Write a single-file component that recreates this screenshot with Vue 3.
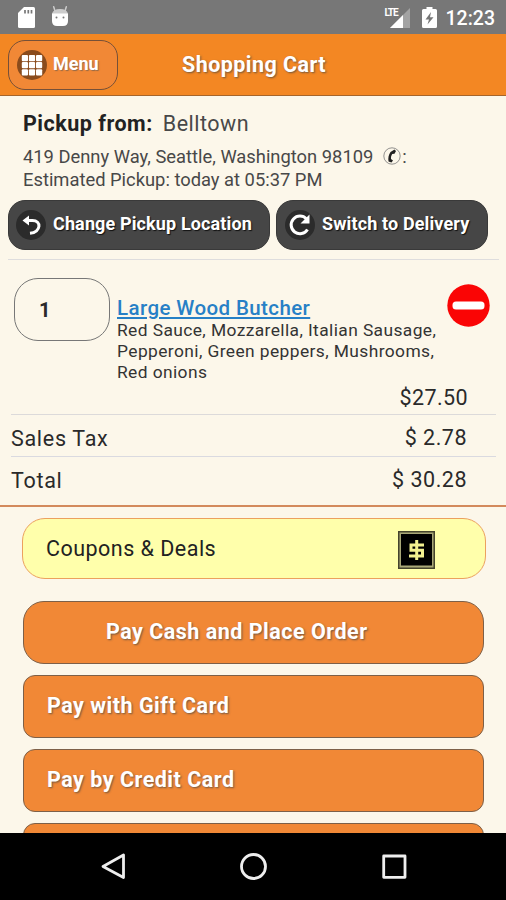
<script setup>
const payments = [
  { label: 'Pay Cash and Place Order', kind: 'primary' },
  { label: 'Pay with Gift Card', kind: 'gift' },
  { label: 'Pay by Credit Card', kind: 'credit' },
]
const toppings = ['Red Sauce, Mozzarella, Italian Sausage,', 'Pepperoni, Green peppers, Mushrooms,', 'Red onions']
const cells = [0, 1, 2, 3, 4, 5, 6, 7, 8]
</script>

<template>
  <div class="screen">
    <div class="status">
      <svg class="sd" width="17" height="21" viewBox="0 0 17 21">
        <path d="M6 0H15.5Q17 0 17 1.5V19.5Q17 21 15.5 21H1.5Q0 21 0 19.500V6Z" fill="#fff" />
        <path d="M7 3V6.500M10.300 3V6.500M13.500 3V6.500" stroke="#777" stroke-width="1.700" />
      </svg>
      <svg class="droid" width="18" height="21" viewBox="0 0 18 21">
        <path d="M4 5L2.700.800M14 5L15.300.800" stroke="#ccc" stroke-width="1.500" stroke-linecap="round" />
        <path d="M1 8Q2 3 9 3T17 8Z" fill="#ccc" />
        <path d="M1 7.500H17V15Q17 20 12 20H6Q1 20 1 15Z" fill="#fff" />
        <circle cx="5.500" cy="11.500" r="1" fill="#777" />
        <circle cx="12.500" cy="11.500" r="1" fill="#777" />
      </svg>
      <div class="network">
        <span class="lte">LTE</span>
        <svg width="21" height="20" viewBox="0 0 21 20">
          <path d="M20 0V20H0Z" fill="#a3a3a3" />
          <path d="M13 7V20H0Z" fill="#fff" />
        </svg>
      </div>
      <svg class="battery" width="15" height="21" viewBox="0 0 15 21">
        <path d="M4.500 0H10.500V2H13.500Q15 2 15 3.500V19.500Q15 21 13.500 21H1.500Q0 21 0 19.500V3.500Q0 2 1.500 2H4.500Z" fill="#fff" />
        <path d="M9 5L3.500 12.500H7L5.500 17.500L11.500 10.300H8Z" fill="#777" />
      </svg>
      <span class="clock">12:23</span>
    </div>

    <header class="header">
      <button class="menu">
        <svg width="30" height="30" viewBox="0 0 30 30">
          <circle cx="15" cy="15" r="15" fill="#8a4b1c" />
          <rect v-for="c in cells" :key="c" :x="4.800 + (c % 3) * 7.100" :y="5 + Math.floor(c / 3) * 7.100" width="6.200" height="6.200" rx="1" fill="#fff" />
        </svg>
        <span class="menu-text">Menu</span>
      </button>
      <h1 class="title">Shopping Cart</h1>
    </header>

    <main class="content">
      <section class="pickup">
        <div class="place"><b>Pickup from:</b><span>Belltown</span></div>
        <div class="address">
          <span class="street">419 Denny Way, Seattle, Washington 98109</span>
          <svg class="phone" width="18" height="18" viewBox="0 0 18 18">
            <circle cx="9" cy="9" r="8.200" fill="none" stroke="#777" stroke-width=".8" />
            <path d="M11.500 2.500L7.500 5C5.500 8 5 11 5.500 14.500L8.500 15.500L10 13.500L8 12C7.800 10 8.300 8.500 9.200 7L11.500 6.800L13 4Z" fill="#222" />
          </svg>
          <span class="colon">:</span>
        </div>
        <div class="eta">Estimated Pickup: today at 05:37 PM</div>
      </section>

      <div class="actions">
        <button class="dark change">
          <svg width="30" height="30" viewBox="0 0 30 30">
            <circle cx="15" cy="15" r="15" fill="#2b2b2b" />
            <path d="M9 10.500H16.500C25.500 10.500 25.500 22 14 23.300" fill="none" stroke="#fff" stroke-width="3" />
            <path d="M6.500 10.500L13 5.500V15.500Z" fill="#fff" />
          </svg>
          <span>Change Pickup Location</span>
        </button>
        <button class="dark switch">
          <svg width="30" height="30" viewBox="0 0 30 30">
            <circle cx="15" cy="15" r="15" fill="#2b2b2b" />
            <path d="M21.500 9A8.800 8.800 0 1 0 22.500 19.500" fill="none" stroke="#fff" stroke-width="3" />
            <path d="M24.500 4.500V13.500H15.500Z" fill="#fff" />
          </svg>
          <span>Switch to Delivery</span>
        </button>
      </div>

      <section class="item">
        <div class="qty">1</div>
        <div class="details">
          <a class="name">Large Wood Butcher</a>
          <p v-for="line in toppings" :key="line" class="topping">{{ line }}</p>
        </div>
        <svg class="remove" width="43" height="43" viewBox="0 0 43 43">
          <circle cx="21.500" cy="21.500" r="21.200" fill="#fa0505" />
          <rect x="5.500" y="17.500" width="32" height="8" rx="3.500" fill="#fff" />
        </svg>
        <div class="price"><span>$27.50</span></div>
      </section>
      <div class="row tax"><span class="label">Sales Tax</span><span>$ 2.78</span></div>
      <div class="row total"><span class="label">Total</span><span>$ 30.28</span></div>

      <section class="checkout">
        <div class="coupon">
          <span class="coupon-text">Coupons &amp; Deals</span>
          <svg width="37" height="38" viewBox="0 0 37 38">
            <rect x=".75" y=".75" width="35.500" height="36.500" fill="#aaa878" stroke="#45442c" stroke-width="1.500" />
            <rect x="3" y="3" width="31" height="31.500" fill="#000" />
            <path d="M26 14H13V19.300H24.500V25H11M18.700 9V29" fill="none" stroke="#f2f090" stroke-width="3" />
          </svg>
        </div>
        <button v-for="p in payments" :key="p.label" class="pay" :class="p.kind"><span>{{ p.label }}</span></button>
        <button class="pay" aria-hidden="true"></button>
      </section>
    </main>

    <nav class="nav">
      <svg width="506" height="67" viewBox="0 0 506 67">
        <g fill="none" stroke="#eee" stroke-width="2.800" stroke-linejoin="round">
          <path d="M123.500 22V44.500L103 33.500Z" />
          <circle cx="253.500" cy="33.500" r="12" />
          <rect x="383.700" y="23" width="21.300" height="21.300" />
        </g>
      </svg>
    </nav>
  </div>
</template>

<style>
body { margin: 0; overflow: hidden; }
</style>

<style scoped>
* { box-sizing: border-box; }
.screen { width: 506px; height: 900px; display: flex; flex-direction: column; overflow: hidden; background: #fcf7ea; font-family: Roboto, sans-serif; color: #2a2a2a; }
button { border: 0; margin: 0; padding: 0; font-family: inherit; text-align: left; }
svg { display: block; flex: none; }
span, a { white-space: nowrap; }

.status { height: 34px; flex: none; background: #777; display: flex; align-items: flex-start; padding: 7px 11px 0 18px; color: #fff; }
.droid { margin-left: 16px; margin-top: -1px; }
.network { position: relative; margin-left: auto; padding: 1px 0 0 5px; }
.lte { position: absolute; left: 0; top: 0; font-size: 10px; line-height: 11px; font-weight: 700; letter-spacing: -1px; }
.battery { margin-left: 11px; }
.clock { margin-left: 9px; font-size: 19.500px; line-height: 23px; font-weight: 500; }

.header { height: 62px; flex: none; background: #f38723; border-bottom: 1px solid #a5652b; display: flex; padding: 6px 8px; }
.menu { width: 110px; height: 50px; background: #f18836; border: 1px solid #765038; border-radius: 17px; display: flex; align-items: center; padding-left: 8px; }
.menu-text { color: #fff; font-size: 18px; line-height: 24px; font-weight: 700; margin: -3px 0 0 6px; text-shadow: 1px 1px 1px #5559; }
.title { margin: 12px 0 0 64px; font-size: 21.500px; line-height: 26px; font-weight: 700; letter-spacing: .450px; color: #fff; text-shadow: 1px 1px 2px #444b; white-space: nowrap; }

.content { flex: 1; min-height: 0; overflow: hidden; }
.pickup { padding: 15px 0 0 23px; height: 104px; color: #484848; }
.place { display: flex; gap: 10px; font-size: 21.500px; line-height: 26px; letter-spacing: .500px; }
.place b { color: #222; font-weight: 700; }
.address { display: flex; height: 23px; margin-top: 8px; }
.address, .eta { font-size: 18.350px; line-height: 23px; }
.phone { margin: 2px 0 0 10px; }
.colon { margin-left: 1px; }
.actions { height: 60px; padding-left: 8px; display: flex; gap: 6px; }
.dark { height: 50px; border-radius: 17px; background: #464646; border: 1px solid #393939; color: #fff; display: flex; align-items: center; font-size: 18px; line-height: 24px; font-weight: 700; letter-spacing: .130px; padding-left: 7px; text-shadow: 1px 1px 1px #111; }
.dark span { margin: -2px 0 0 7px; }
.change { width: 262px; }
.switch { width: 212px; padding-left: 8px; }

.item { height: 155px; position: relative; margin: 0 10px 0 11px; border-bottom: 1px solid #dcdada; display: grid; grid-template-columns: 106px 330px 43px; align-items: start; }
.item::before { content: ''; position: absolute; top: -1px; left: -3px; right: -3px; height: 1px; background: #dedddd; }
.qty { width: 96px; height: 63px; margin: 18px 0 0 3px; border: 1px solid #777; border-radius: 24px; padding: 19px 0 0 24px; font-size: 20px; line-height: 25px; font-weight: 700; }
.name { display: block; width: max-content; margin-top: 36px; font-size: 20.500px; line-height: 25px; font-weight: 500; letter-spacing: .400px; color: #2780c6; text-decoration: underline; text-decoration-thickness: 1.500px; text-underline-offset: 2px; }
.topping { margin: 0; font-size: 17.400px; line-height: 21px; letter-spacing: .400px; color: #333; white-space: nowrap; position: relative; top: -1px; }
.remove { margin-top: 24px; }
.price { grid-column: 1 / -1; display: flex; justify-content: flex-end; margin-top: -2px; padding-right: 22px; font-size: 21.500px; line-height: 26px; letter-spacing: .400px; }
.row { display: flex; justify-content: space-between; margin: 0 10px 0 11px; font-size: 21.500px; line-height: 26px; letter-spacing: .500px; }
.label { padding-top: 1px; letter-spacing: .700px; }
.tax { height: 42px; border-bottom: 1px solid #dadae0; padding: 10px 29px 0 0; }
.total { height: 48px; padding: 10px 29px 0 0; }

.checkout { border-top: 2px solid #d38a5c; padding: 11px 20px 0 23px; }
.coupon { height: 61px; width: 464px; margin-left: -1px; margin-bottom: 22px; border: 1.500px solid #eca15e; border-radius: 23px; background: #ffffab; padding: 0 50px 0 23px; display: flex; align-items: center; justify-content: space-between; font-size: 21.500px; line-height: 26px; letter-spacing: .480px; color: #222; }
.coupon svg { margin-top: 2px; }
.pay { display: block; width: 461px; height: 63px; margin-bottom: 11px; border: 1px solid #7d6048; border-radius: 12px; background: #f18836; color: #fff; font-size: 21.500px; line-height: 26px; font-weight: 700; letter-spacing: .500px; text-shadow: 1px 1px 2px #444b; padding: 0 0 2px 23px; }
.primary { border-radius: 21px; padding-left: 82px; }

.nav { height: 67px; flex: none; background: #000; }
</style>
